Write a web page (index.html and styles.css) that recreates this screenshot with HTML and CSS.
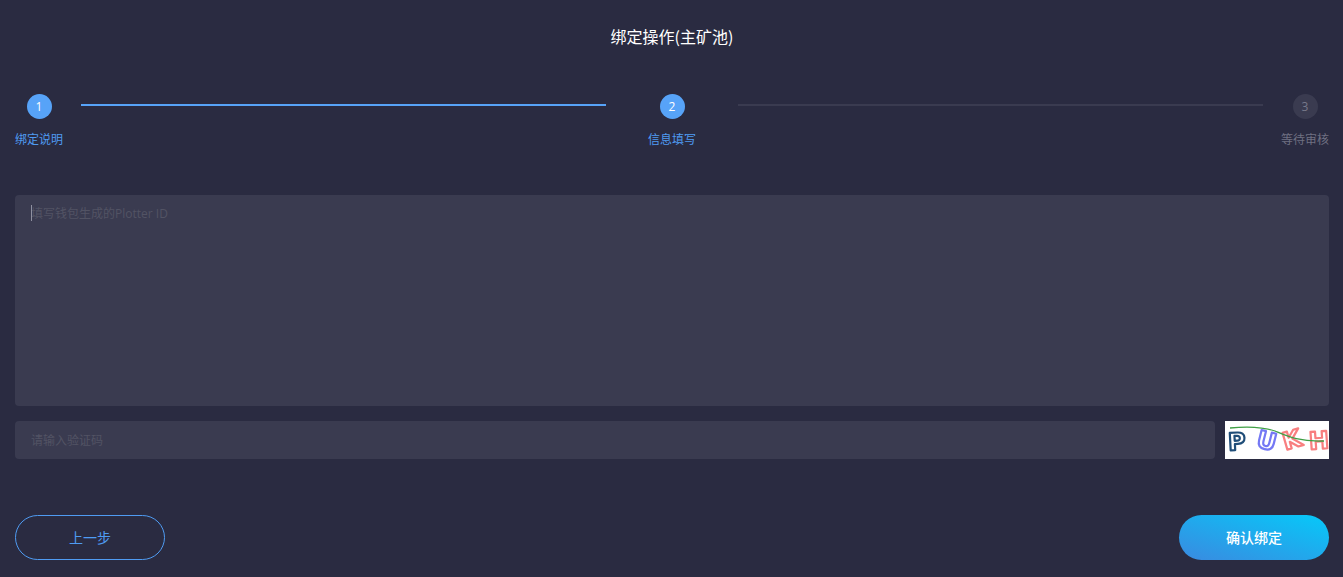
FILE: index.html
```html
<!DOCTYPE html>
<html lang="zh-CN">
<head>
<meta charset="utf-8">
<title>绑定操作(主矿池)</title>
<link rel="stylesheet" href="styles.css">
</head>
<body>
<main class="page">
  <h1 class="title">绑定操作(主矿池)</h1>
  <div class="steps">
    <div class="step active"><span class="dot">1</span><span class="label">绑定说明</span></div>
    <div class="line line-a active"></div>
    <div class="step active"><span class="dot">2</span><span class="label">信息填写</span></div>
    <div class="line line-b"></div>
    <div class="step"><span class="dot">3</span><span class="label">等待审核</span></div>
  </div>
  <div class="area-wrap">
    <textarea class="area" placeholder="填写钱包生成的Plotter ID"></textarea>
    <span class="caret"></span>
  </div>
  <div class="code-row">
    <input class="code" type="text" placeholder="请输入验证码">
    <svg class="captcha" viewBox="0 0 104 38" width="104" height="38" role="img" aria-label="验证码">
      <rect width="104" height="38" fill="#fff"/>
      <g class="cap-blur">
        <text class="cap cap-p" x="3" y="29" transform="rotate(-3 12 20)">P</text>
        <text class="cap cap-u" x="32" y="28" transform="rotate(14 41 20)">U</text>
        <text class="cap cap-k" x="58" y="27" transform="rotate(-16 67 20)">K</text>
        <text class="cap cap-h" x="84" y="28" transform="rotate(-4 93 20)">H</text>
        <path d="M5 7C24 5 38 6 50 10C62 15 74 21 99 20" fill="none" stroke="#3f9f45" stroke-width="1.3"/>
      </g>
    </svg>
  </div>
  <div class="actions">
    <button class="btn btn-ghost" type="button">上一步</button>
    <button class="btn btn-primary" type="button">确认绑定</button>
  </div>
</main>
</body>
</html>
```
FILE: styles.css
```css
* { box-sizing: border-box; }
html, body { margin: 0; height: 100%; }
body {
  background: #2a2b41;
  font-family: "Noto Sans CJK SC", "Noto Sans", sans-serif;
  overflow: hidden;
}
.page { padding: 0 14px 0 15px; height: 577px; }
.title {
  margin: 0;
  padding-top: 25px;
  height: 94px;
  font-size: 16px;
  line-height: 23px;
  font-weight: 400;
  text-align: center;
  color: #fff;
}
.steps { display: flex; align-items: flex-start; height: 101px; }
.step {
  width: 48px;
  display: flex;
  flex-direction: column;
  align-items: center;
  flex: none;
}
.dot {
  width: 25px;
  height: 25px;
  border-radius: 50%;
  background: #3a3b50;
  color: #77788a;
  font-size: 12px;
  line-height: 25px;
  text-align: center;
  font-family: "Open Sans", sans-serif;
}
.label {
  margin-top: 11px;
  font-size: 12px;
  line-height: 17px;
  color: #6f7082;
  white-space: nowrap;
}
.step.active .dot { background: #57a3f8; color: #fff; }
.step.active .label { color: #4f9bf2; }
.line {
  flex: 1;
  height: 2px;
  margin-top: 10px;
  background: #3a3b50;
}
.line.active { background: #57a3f8; }
.line-a { margin-left: 18px; margin-right: 42px; }
.line-b { margin-left: 42px; margin-right: 18px; }
.area-wrap { position: relative; height: 211px; }
.area, .code {
  display: block;
  width: 100%;
  border: 0;
  outline: 0;
  background: #3a3b50;
  border-radius: 4px;
  color: #fff;
  font-family: "Open Sans", "Noto Sans CJK SC", sans-serif;
  font-size: 12px;
  padding: 0 16px;
}
.area {
  height: 211px;
  padding-top: 9px;
  line-height: 20px;
  resize: none;
}
.area::placeholder, .code::placeholder { color: #525364; opacity: 1; }
.caret {
  position: absolute;
  left: 16px;
  top: 10px;
  width: 1px;
  height: 16px;
  background: #8f90a0;
}
.code-row { display: flex; gap: 10px; margin-top: 15px; height: 38px; }
.code { flex: 1; height: 38px; min-width: 0; }
.captcha { flex: none; display: block; }
.cap-blur { filter: blur(0.6px); }
.cap {
  font-family: "DejaVu Sans", sans-serif;
  font-weight: 700;
  font-size: 24px;
  fill: #fff;
  stroke-width: 2.2;
  stroke-linejoin: round;
}
.cap-p { stroke: #1f4d78; }
.cap-u { stroke: #7478f4; }
.cap-k { stroke: #f87f80; }
.cap-h { stroke: #f87f80; }
.actions { display: flex; justify-content: space-between; margin-top: 56px; }
.btn {
  width: 150px;
  height: 45px;
  border-radius: 23px;
  font-family: "Noto Sans CJK SC", "Noto Sans", sans-serif;
  font-size: 14px;
  padding: 0 0 2px;
  cursor: pointer;
}
.btn-ghost { background: transparent; border: 1px solid #4f9bf2; color: #4f9bf2; }
.btn-primary {
  border: 0;
  color: #fff;
  font-weight: 500;
  background: linear-gradient(to top right, #3a8ae0, #06c9f9);
}
```
